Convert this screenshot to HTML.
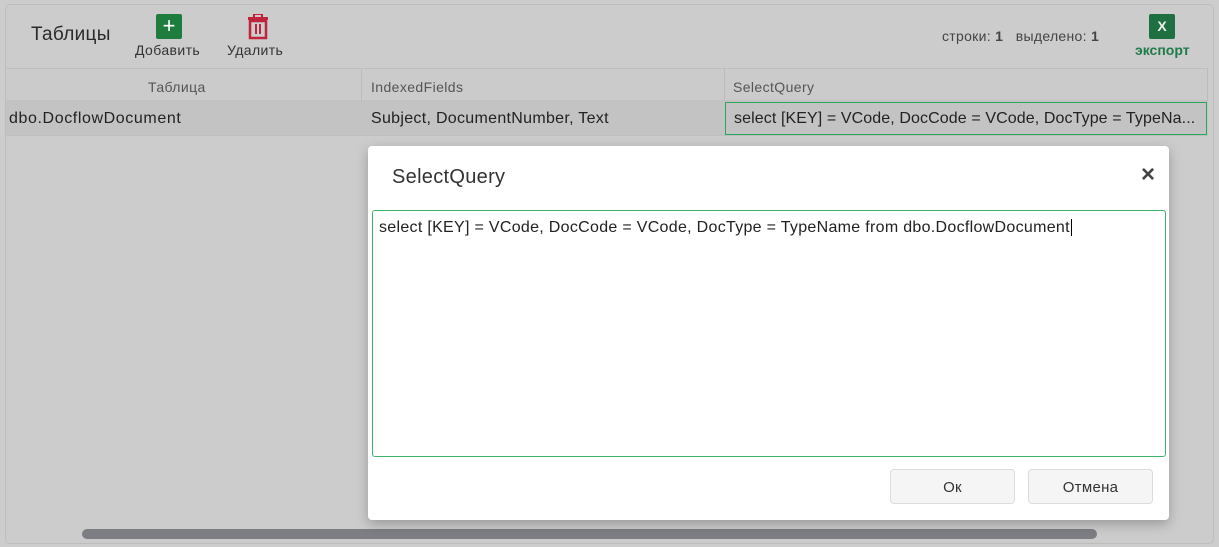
<!DOCTYPE html>
<html><head><meta charset="utf-8"><style>
*{box-sizing:border-box;margin:0;padding:0}
body{width:1219px;height:547px;background:#cdcdcd;font-family:"Liberation Sans","Noto Sans CJK SC",sans-serif;position:relative;overflow:hidden;color:#333}
.panel{position:absolute;left:5px;top:4px;width:1209px;height:540px;border:1px solid #bdbdbd;border-radius:5px;background:#cccccc}
.a{position:absolute;white-space:nowrap}
.hdr{position:absolute;left:6px;top:68px;width:1202px;height:33px;border-top:1px solid #bebebe;border-bottom:1px solid #c2c2c2;background:#cbcbcb}
.row{position:absolute;left:6px;top:101px;width:1202px;height:35px;background:#c3c3c3;border-bottom:1px solid #bebebe}
.vl{position:absolute;width:1px;background:#bbb}
.dlg{position:absolute;left:368px;top:146px;width:801px;height:374px;background:#fff;border-radius:4px;box-shadow:0 4px 12px rgba(0,0,0,.25)}
.btn{position:absolute;top:323px;height:35px;border:1px solid #dcdcdc;border-radius:4px;background:#f5f5f5;font-size:15px;text-align:center;line-height:35px;color:#333;letter-spacing:.3px}
</style></head><body>
<div class="panel"></div>
<div class="a" style="left:31px;top:24px;font-size:19px;color:#2a2a2a;letter-spacing:.3px">Таблицы</div>
<div class="a" style="left:156px;top:14px;width:26px;height:25px;background:#1e7c3e;border-radius:2px;color:#fff;font-size:22px;line-height:24px;text-align:center">+</div>
<div class="a" style="left:135px;top:42px;font-size:14px;letter-spacing:.4px">Добавить</div>
<svg class="a" style="left:247px;top:14px" width="22" height="26" viewBox="0 0 22 26"><rect x="1" y="3" width="20" height="3" fill="#c0243c"/><rect x="7" y="0" width="8" height="4" fill="none" stroke="#c0243c" stroke-width="2"/><path d="M3 7h16v17H3z" fill="none" stroke="#c0243c" stroke-width="2.5"/><rect x="8" y="10" width="2" height="10" fill="#c0243c"/><rect x="12" y="10" width="2" height="10" fill="#c0243c"/></svg>
<div class="a" style="left:227px;top:42px;font-size:14px;letter-spacing:.4px">Удалить</div>
<div class="a" style="left:942px;top:28px;font-size:14px;color:#444;letter-spacing:.3px">строки: <b>1</b>&nbsp;&nbsp;&nbsp;выделено: <b>1</b></div>
<div class="a" style="left:1149px;top:14px;width:26px;height:25px;background:#1e7040;border-radius:2px;color:#eee;font-size:14px;font-weight:bold;line-height:25px;text-align:center">X</div>
<div class="a" style="left:1135px;top:42px;font-size:14px;font-weight:bold;color:#1e7c4a">экспорт</div>
<div class="hdr"></div>
<div class="vl" style="left:361px;top:69px;height:67px"></div>
<div class="vl" style="left:724px;top:69px;height:67px"></div>
<div class="vl" style="left:1207px;top:69px;height:67px"></div>
<div class="a" style="left:148px;top:79px;font-size:14px;color:#555;letter-spacing:.4px">Таблица</div>
<div class="a" style="left:371px;top:79px;font-size:14px;color:#555;letter-spacing:.4px">IndexedFields</div>
<div class="a" style="left:733px;top:79px;font-size:14px;color:#555;letter-spacing:.4px">SelectQuery</div>
<div class="row"></div>
<div class="a" style="left:9px;top:110px;font-size:16px;color:#222;letter-spacing:.6px">dbo.DocflowDocument</div>
<div class="a" style="left:371px;top:110px;font-size:16px;color:#222;letter-spacing:.3px">Subject, DocumentNumber, Text</div>
<div class="a" style="left:725px;top:102px;width:482px;height:33px;border:1px solid #2aa85a;font-size:16px;color:#222;padding:7px 0 0 8px;letter-spacing:.1px">select [KEY] = VCode, DocCode = VCode, DocType = TypeNa...</div>
<div class="a" style="left:82px;top:529px;width:1015px;height:10px;background:#7c7e84;border-radius:5px"></div>
<div class="dlg">
<div class="a" style="left:24px;top:20px;font-size:20px;color:#333;letter-spacing:.3px">SelectQuery</div>
<div class="a" style="left:773px;top:15px;font-size:24px;color:#444;font-weight:bold">×</div>
<div class="a" style="left:4px;top:64px;width:794px;height:247px;border:1px solid #3cb46e;border-radius:3px;font-size:16px;color:#222;padding:8px 0 0 6px;letter-spacing:.3px">select [KEY] = VCode, DocCode = VCode, DocType = TypeName from dbo.DocflowDocument<span style="border-left:1px solid #000;margin-left:1px"></span></div>
<div class="btn" style="left:522px;width:125px">Ок</div>
<div class="btn" style="left:660px;width:125px">Отмена</div>
</div>
</body></html>
